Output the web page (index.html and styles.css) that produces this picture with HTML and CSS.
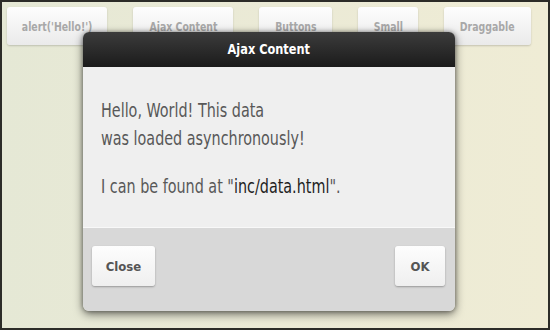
FILE: index.html
```html
<!DOCTYPE html>
<html>
<head>
<meta charset="utf-8">
<link rel="stylesheet" href="styles.css">
</head>
<body>
<div class="screen">
  <div class="toolbar">
    <button class="tbtn w1"><span class="lbl">alert('Hello!')</span></button>
    <button class="tbtn w2"><span class="lbl">Ajax Content</span></button>
    <button class="tbtn w3"><span class="lbl">Buttons</span></button>
    <button class="tbtn w4"><span class="lbl">Small</span></button>
    <button class="tbtn w5"><span class="lbl">Draggable</span></button>
  </div>
  <div class="dialog">
    <div class="dlg-title"><span class="ttl">Ajax Content</span></div>
    <div class="dlg-body">
      <p class="para">Hello, World! This data<br>was loaded asynchronously!</p>
      <p class="para second">I can be found at "<span class="path">inc/data.html</span>".</p>
    </div>
    <div class="dlg-footer">
      <button class="fbtn close">Close</button>
      <button class="fbtn ok">OK</button>
    </div>
  </div>
</div>
</body>
</html>
```

FILE: styles.css
```css
html, body {
  margin: 0;
  padding: 0;
}
body {
  width: 550px;
  height: 330px;
  overflow: hidden;
  font-family: "DejaVu Sans Condensed", "DejaVu Sans", sans-serif;
}
.screen {
  position: relative;
  box-sizing: border-box;
  width: 550px;
  height: 330px;
  border: 2px solid #2c2c28;
  background: linear-gradient(90deg, #e5e8d5 0%, #ebead6 50%, #efecd5 100%);
}
.toolbar {
  display: flex;
  gap: 26px;
  padding: 5px 0 0 5px;
}
.tbtn {
  height: 38px;
  border: none;
  border-radius: 3px;
  background: linear-gradient(#fdfdfd, #eaeaea);
  box-shadow: 0 1px 2px rgba(0,0,0,0.18);
  color: #a8a8a8;
  font-family: inherit;
  font-size: 13px;
  font-weight: bold;
  padding: 0;
  overflow: hidden;
}
.lbl {
  display: inline-block;
  transform: scaleX(0.8);
  white-space: nowrap;
}
.w1 { width: 100px; }
.w2 { width: 100px; }
.w3 { width: 73px; }
.w4 { width: 60px; }
.w5 { width: 87px; }
.dialog {
  position: absolute;
  left: 81px;
  top: 30px;
  width: 372px;
  height: 279px;
  border-radius: 6px;
  display: flex;
  flex-direction: column;
  overflow: hidden;
  box-shadow: 0 3px 10px rgba(0,0,0,0.55), 0 0 4px rgba(0,0,0,0.35);
}
.dlg-title {
  height: 35px;
  line-height: 35px;
  text-align: center;
  color: #fff;
  font-size: 14px;
  font-weight: bold;
  background: linear-gradient(#3c3c3c, #1b1b1b);
}
.ttl {
  display: inline-block;
  transform: scaleX(0.9);
}
.dlg-body {
  height: 161px;
  box-sizing: border-box;
  background: #efefef;
  padding: 29px 0 0 18px;
  border-bottom: 1px solid #f8f8f8;
}
.para {
  margin: 0;
  font-size: 19px;
  line-height: 28px;
  color: #585858;
  transform: scaleX(0.84);
  transform-origin: left center;
  white-space: nowrap;
}
.second {
  margin-top: 20px;
}
.path {
  color: #1e1e1e;
}
.dlg-footer {
  flex: 1;
  background: #d8d8d8;
  display: flex;
  justify-content: space-between;
  align-items: flex-start;
  padding: 18px 10px 0 9px;
}
.fbtn {
  height: 40px;
  border: none;
  border-radius: 3px;
  background: linear-gradient(#fdfdfd, #efefef);
  box-shadow: 0 1px 2px rgba(0,0,0,0.3);
  color: #555;
  font-family: inherit;
  font-size: 13px;
  font-weight: bold;
  padding: 0;
}
.close { width: 63px; }
.ok { width: 50px; }
```
